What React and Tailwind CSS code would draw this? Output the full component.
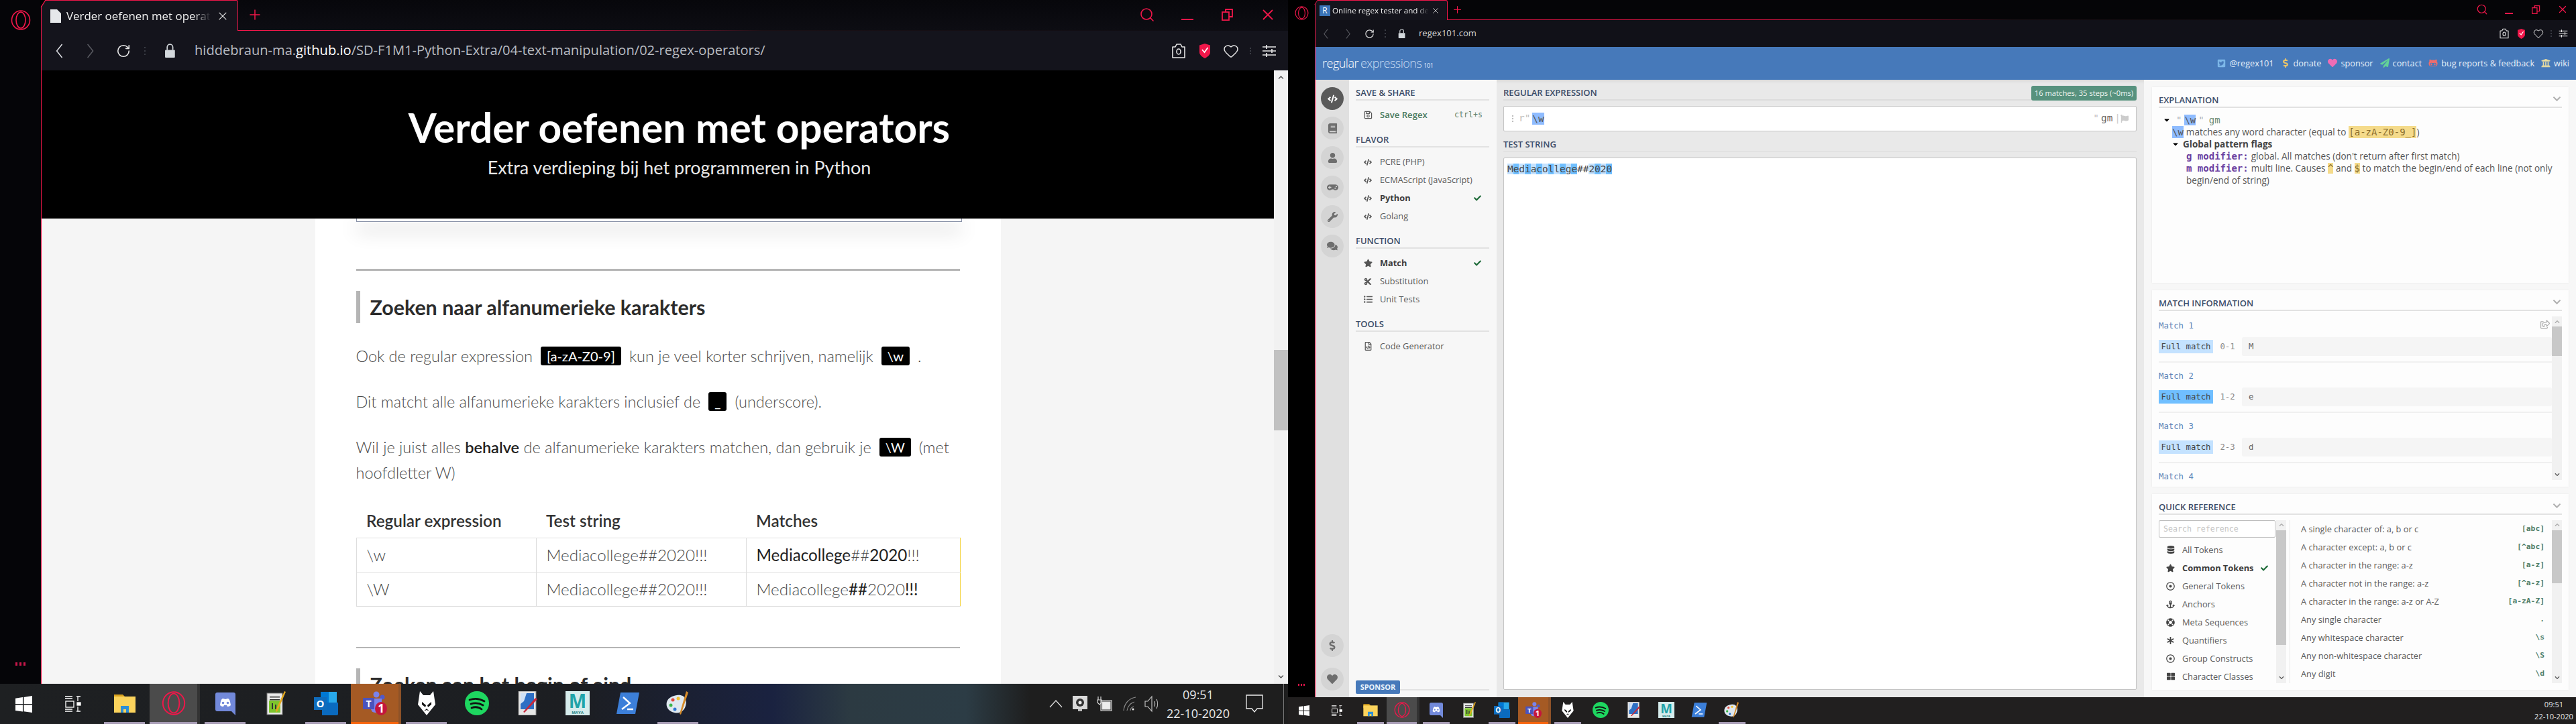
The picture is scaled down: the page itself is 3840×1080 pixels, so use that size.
import React from 'react';
import { Search, X, Plus, RotateCw, Heart } from 'lucide-react';
import {
  FaCode, FaBook, FaUser, FaGamepad, FaWrench, FaComments, FaDollarSign, FaHeart, FaRegSave, FaStar, FaCut,
  FaListUl, FaRegFileCode, FaCheck, FaDatabase, FaRegDotCircle, FaAnchor, FaLifeRing, FaAsterisk, FaThLarge,
  FaTwitterSquare, FaPaperPlane, FaGithubAlt, FaUniversity, FaFlag, FaRegShareSquare, FaChevronDown, FaCaretDown,
} from 'react-icons/fa';

const OPEN = "font-['Open_Sans',sans-serif]";
const MONO = "font-['DejaVu_Sans_Mono',monospace]";
const RED = '#f0174a';

// ---------- small drawings ----------
const OperaLogo = ({ size = 30 }) => (
  <svg width={size} height={size} viewBox="0 0 30 30" fill="none" stroke={RED} strokeWidth="1.6">
    <ellipse cx="15" cy="15" rx="13.5" ry="14" />
    <ellipse cx="15" cy="15" rx="7" ry="12" />
  </svg>
);

const Chevron = ({ dir = 'left', color, h = 22 }) => (
  <svg width={h * 0.6} height={h} viewBox="0 0 12 22" fill="none" stroke={color} strokeWidth="1.5">
    <polyline points={dir === 'left' ? '10,1 2,11 10,21' : '2,1 10,11 2,21'} />
  </svg>
);

const Dots = ({ color = '#3a3c44', gap = 'gap-[3px]' }) => (
  <div className={`flex flex-col ${gap}`}>
    <div className="w-[2px] h-[2px]" style={{ background: color }} />
    <div className="w-[2px] h-[2px]" style={{ background: color }} />
    <div className="w-[2px] h-[2px]" style={{ background: color }} />
  </div>
);

const LockIcon = ({ size = 20, color = '#d3d8dc' }) => (
  <svg width={size * 0.8} height={size} viewBox="0 0 16 20" fill={color}>
    <path d="M2 9h12a1 1 0 0 1 1 1v9a1 1 0 0 1-1 1H2a1 1 0 0 1-1-1v-9a1 1 0 0 1 1-1z" />
    <path d="M4 9V5a4 4 0 0 1 8 0v4" fill="none" stroke={color} strokeWidth="1.6" />
  </svg>
);

const CameraIcon = ({ size = 24, color = '#e6e6e6' }) => (
  <svg width={size} height={size} viewBox="0 0 24 24" fill="none" stroke={color} strokeWidth="1.6">
    <path d="M3 6h4l2-4h6l2 4h4v16H3z" strokeLinejoin="round" />
    <ellipse cx="12" cy="13" rx="3" ry="4" />
  </svg>
);

const ShieldIcon = ({ size = 22 }) => (
  <svg width={size} height={size} viewBox="0 0 22 22">
    <path d="M3 2.5 11 0l8 2.5V13c0 4-4 7-8 9-4-2-8-5-8-9z" fill={RED} />
    <polyline points="7,9 10.5,13 15.5,6" fill="none" stroke="#fff" strokeWidth="1.8" />
  </svg>
);

const SlidersIcon = ({ size = 22, color = '#e6e6e6' }) => (
  <svg width={size} height={size} viewBox="0 0 22 22" stroke={color} strokeWidth="1.7">
    <path d="M1 5h20M1 11h20M1 17h20M7 2v6M15 8v6M7 14v6" fill="none" />
  </svg>
);

const RestoreIcon = ({ size = 18 }) => (
  <svg width={size} height={size} viewBox="0 0 18 18" fill="none" stroke={RED} strokeWidth="1.8">
    <rect x="1" y="5" width="10" height="12" />
    <path d="M6 5V1h10v11h-5" />
  </svg>
);

const WinLogo = ({ size = 24 }) => (
  <svg width={size} height={size} viewBox="0 0 24 24" fill="#fff">
    <path d="M0 3.5 10.5 2v9.500H0zM12 1.800 24 0v11.500H12zM0 13h10.500v9.500L0 21zM12 13h12v11l-12-1.800z" />
  </svg>
);

const TaskViewIcon = ({ size = 24 }) => (
  <svg width={size} height={size} viewBox="0 0 24 24" fill="none" stroke="#fff" strokeWidth="1.3">
    <path d="M0 1h11M0 23h11M0 20h11M0 4h11" />
    <rect x="1" y="8" width="12" height="9" />
    <path d="M17 1h6M17 23h6M19 1v7M19 16v7" />
    <rect x="18" y="10" width="5" height="4" fill="#fff" />
  </svg>
);

// taskbar app icons, all on a 36 grid
const AppIcon = ({ name, size }) => {
  const p = { width: size, height: size, viewBox: '0 0 36 36' };
  if (name === 'explorer') return (
    <svg {...p}>
      <path d="M2 5h13l3 3v6H2z" fill="#d9a21e" />
      <rect x="2" y="8" width="32" height="24" fill="#fbd35c" />
      <path d="M12 22h12v10h-4v-5h-4v5h-4z" fill="#2e8fd8" />
    </svg>
  );
  if (name === 'opera') return <OperaLogo size={size} />;
  if (name === 'discord') return (
    <svg {...p}>
      <path d="M6 2h24a3 3 0 0 1 3 3v31l-6-6H6a3 3 0 0 1-3-3V5a3 3 0 0 1 3-3z" fill="#7289da" />
      <path d="M10 21c1-7 2-9 4-10l4 1 4-1c2 1 3 3 4 10-2 2-4 2-5 2l-1-2h-4l-1 2c-1 0-3 0-5-2z" fill="#fff" />
      <circle cx="14.500" cy="17.500" r="1.800" fill="#7289da" />
      <circle cx="21.500" cy="17.500" r="1.800" fill="#7289da" />
    </svg>
  );
  if (name === 'notepad') return (
    <svg {...p}>
      <rect x="5" y="3" width="23" height="32" fill="#e8e8e8" stroke="#777" />
      <rect x="8" y="14" width="17" height="18" fill="#7dc52c" />
      <path d="M12 18h2v9h-2zM17 20h2v7h-2zM9 12h15v1.500H9zM9 8h15v1.500H9z" fill="#333" />
      <path d="M33 1 21 29l-3 3 .5-5L31 0z" fill="#e3a81d" />
    </svg>
  );
  if (name === 'outlook') return (
    <svg {...p}>
      <rect x="10" y="1" width="24" height="16" fill="#28a8ea" />
      <rect x="10" y="1" width="12" height="16" fill="#0078d4" />
      <path d="M12 17h24v17a2 2 0 0 1-2 2H12z" fill="#0a6abf" />
      <rect x="0" y="9" width="19" height="19" fill="#0f6cbd" />
      <text x="9.500" y="24" fontSize="15" fontWeight="700" fill="#fff" textAnchor="middle" fontFamily="Open Sans">O</text>
    </svg>
  );
  if (name === 'teams') return (
    <svg {...p}>
      <circle cx="20" cy="5" r="4.500" fill="#7b83eb" />
      <circle cx="29" cy="9" r="3.500" fill="#5059c9" />
      <path d="M12 11h16v15a6 6 0 0 1-6 6h-4a6 6 0 0 1-6-6z" fill="#7b83eb" />
      <rect x="0" y="10" width="17" height="17" rx="1" fill="#4b53bc" />
      <text x="8.500" y="24" fontSize="14" fontWeight="700" fill="#fff" textAnchor="middle" fontFamily="Open Sans">T</text>
      <ellipse cx="27" cy="26" rx="9" ry="10" fill="#c4163c" />
      <text x="27" y="32" fontSize="17" fontWeight="700" fill="#fff" textAnchor="middle" fontFamily="Open Sans">1</text>
    </svg>
  );
  if (name === 'fox') return (
    <svg {...p}>
      <path d="M8 0l5 6h10l5-6 3 20-13 16L5 20z" fill="#fff" />
      <path d="M11 16l6 5-1 3-5-4zM25 16l-6 5 1 3 5-4zM14 30l4-4 4 4-4-2z" fill="#111" />
    </svg>
  );
  if (name === 'spotify') return (
    <svg {...p}>
      <ellipse cx="18" cy="18" rx="18" ry="18" fill="#1ed760" />
      <path d="M7 13c8-3 15-2 22 2M9 19c6-2 13-1 18 2M10 25c5-2 11-1 15 2" fill="none" stroke="#111" strokeWidth="2.800" strokeLinecap="round" />
    </svg>
  );
  if (name === 'paint') return (
    <svg {...p}>
      <rect x="5" y="0" width="26" height="36" fill="#e6e6e6" stroke="#888" />
      <rect x="8" y="3" width="20" height="24" fill="#2e6fc4" />
      <path d="M8 3h9l-4 12-5 4z" fill="#cfe0f5" />
      <path d="M33 12 14 32l-2-1 18-21z" fill="#c8283c" />
    </svg>
  );
  if (name === 'maya') return (
    <svg {...p}>
      <rect x="0" y="0" width="36" height="36" fill="#d6ecec" />
      <text x="18" y="25" fontSize="28" fontWeight="700" fill="#21a3a8" textAnchor="middle" fontFamily="Open Sans">M</text>
      <text x="18" y="34" fontSize="6" fontWeight="700" fill="#1a7f83" textAnchor="middle" fontFamily="Open Sans">MAYA</text>
    </svg>
  );
  if (name === 'shell') return (
    <svg {...p}>
      <path d="M7 2h28l-6 32H1z" fill="#3c7fd9" />
      <path d="M11 9l10 9-12 9M17 27h9" fill="none" stroke="#fff" strokeWidth="2.400" />
    </svg>
  );
  // palette
  return (
    <svg {...p}>
      <path d="M16 6c10-2 16 6 13 16-2 8-9 12-17 10C4 30-1 24 1 16 3 10 9 7 16 6z" fill="#dfe8ef" />
      <circle cx="10" cy="13" r="2.500" fill="#e2483c" />
      <circle cx="18" cy="11" r="2.500" fill="#f1c232" />
      <circle cx="7" cy="21" r="2.500" fill="#39b54a" />
      <circle cx="13" cy="27" r="2.500" fill="#2e78d2" />
      <path d="M30 0l3 2-11 33-2-1z" fill="#d58a28" />
    </svg>
  );
};

const TRAY_APPS = ['explorer', 'opera', 'discord', 'notepad', 'outlook', 'teams', 'fox', 'spotify', 'paint', 'maya', 'shell', 'palette'];
const OPEN_APPS = ['explorer', 'opera', 'discord', 'outlook', 'fox', 'palette'];

const TaskSlot = ({ name, slotClass, iconSize, barClass }) => {
  const active = name === 'opera';
  const teams = name === 'teams';
  const running = OPEN_APPS.includes(name);
  return (
    <div className={`${slotClass} h-full flex flex-col ${active ? 'bg-[#4b4b4b] border-r-[4px] border-[#333]' : ''} ${teams ? 'bg-[#a55a24] border-r-[4px] border-[#8e5228]' : ''}`}>
      <div className="flex-1 flex items-center justify-center">
        <AppIcon name={name} size={iconSize} />
      </div>
      {teams ? <div className="h-[3px] w-full bg-[#f7630c]" /> : active ? <div className="h-[3px] w-full bg-[#a79cb5]" /> : running ? <div className={`${barClass} h-[3px] self-center bg-[#a79cb5]`} /> : <div className="h-[3px]" />}
    </div>
  );
};

const Tray = () => (
  <div className={`flex items-center h-full ${OPEN} text-[#e8e8e8]`}>
    <svg width="20" height="12" viewBox="0 0 20 12" fill="none" stroke="#ddd" strokeWidth="1.300" className="mr-[15px]"><path d="M1 11 10 1l9 10" /></svg>
    <svg width="22" height="24" viewBox="0 0 22 24" className="mr-[14px]">
      <rect x="0" y="0" width="22" height="20" fill="#d9d9d9" />
      <circle cx="11" cy="10" r="6" fill="#333" />
      <circle cx="11" cy="10" r="2.500" fill="#eee" />
      <path d="M8 20h6v3H8z" fill="#bbb" />
    </svg>
    <svg width="24" height="24" viewBox="0 0 24 24" fill="none" stroke="#ddd" strokeWidth="1.200" className="mr-[14px]">
      <rect x="6" y="7" width="16" height="15" /><rect x="8" y="9" width="12" height="11" fill="#eee" /><path d="M2 1v5M6 1v5M1 6h6v4l-3 3-3-3z" />
    </svg>
    <svg width="22" height="24" viewBox="0 0 22 24" fill="none" stroke="#888" strokeWidth="1.200" className="mr-[10px]">
      <path d="M2 22C3 12 9 4 20 2M7 22c1-6 5-11 11-13M12 22c0-3 2-5 5-6" /><circle cx="16" cy="20" r="1.500" fill="#eee" stroke="none" />
    </svg>
    <svg width="24" height="26" viewBox="0 0 24 26" fill="none" stroke="#ccc" strokeWidth="1.100" className="mr-[7px]">
      <path d="M2 9h4l6-7v22l-6-7H2zM16 9c1 3 1 5 0 8M19 6c2 4 2 10 0 14" />
    </svg>
    <div className="w-[100px] flex flex-col items-center text-[18px] leading-[28px]">
      <span>09:51</span>
      <span>22-10-2020</span>
    </div>
    <svg width="26" height="28" viewBox="0 0 26 28" fill="none" stroke="#eee" strokeWidth="1.300" className="ml-[21px] mr-[30px]">
      <path d="M1 1h24v20h-8l-4 5-4-5H1z" />
    </svg>
    <div className="w-px h-full bg-[#777]" />
    <div className="w-[6px]" />
  </div>
);

const Scrollbar = ({ thumb, w = 'w-[15px]', className = '' }) => (
  <div className={`${w} shrink-0 bg-[#f1f1f1] flex flex-col ${className}`}>
    <div className="h-[15px] flex items-center justify-center text-[#aaa]"><FaChevronDown size={8} className="rotate-180" /></div>
    <div className="flex-1 flex flex-col">
      <div className={`${thumb} bg-[#c8c8c8]`} />
    </div>
    <div className="h-[15px] flex items-center justify-center text-[#555]"><FaChevronDown size={8} /></div>
  </div>
);

// ---------- left window: the lesson page ----------
const Code = ({ children }) => (
  <code className="inline-block align-[1px] h-[28px] leading-[28px] mx-[12px] px-[9px] rounded-[3px] bg-black text-white font-['Lato',sans-serif] font-normal text-[20.1px]">{children}</code>
);

const H2 = ({ children, className = '' }) => (
  <h2 className={`${className} h-[48px] flex items-center border-l-[6px] border-[#b5b5b5] pl-[15px] text-[30.4px] font-bold text-[#2c2c2c]`}>{children}</h2>
);

const Mixed = ({ parts }) => parts.map(([t, bold], i) => (
  <span key={i} className={bold ? 'font-normal text-[#222]' : ''}>{t}</span>
));

const LessonPage = () => (
  <div className="flex-1 min-w-0 flex flex-col overflow-hidden">
    <div className="h-[221px] bg-black text-center flex flex-col items-center pt-[47px] pl-[64px] font-['Lato',sans-serif]">
      <h1 className="text-[60.4px] leading-[76px] font-bold text-white">Verder oefenen met operators</h1>
      <p className="mt-[4px] text-[26.9px] leading-[36px] font-normal text-[#e8e8e8]">Extra verdieping bij het programmeren in Python</p>
    </div>
    <div className="flex-1 bg-[#f5f5f5] flex justify-center min-h-0">
      <div className="w-[1022px] h-full bg-white px-[61px] font-['Lato',sans-serif] font-light text-[23.5px] leading-[38px] text-[#4a4a4a] overflow-hidden">
        <div className="w-[903px] h-[5px] border-x border-b border-[#8a93a8] shadow-[0_12px_28px_rgba(0,0,0,0.3)]" />
        <div className="mt-[70px] h-[3px] bg-[#b5b5b5]" />
        <H2 className="mt-[30px]">Zoeken naar alfanumerieke karakters</H2>
        <p className="mt-[30px] whitespace-nowrap">Ook de regular expression<Code>[a-zA-Z0-9]</Code>kun je veel korter schrijven, namelijk<Code>\w</Code>.</p>
        <p className="mt-[30px] whitespace-nowrap">Dit matcht alle alfanumerieke karakters inclusief de<Code>_</Code>(underscore).</p>
        <p className="mt-[30px]">Wil je juist alles <b className="font-semibold text-[#222]">behalve</b> de alfanumerieke karakters matchen, dan gebruik je<Code>\W</Code>(met hoofdletter W)</p>
        <table className="mt-[28px] w-[901px] table-fixed border-collapse">
          <thead>
            <tr className="h-[50px] text-left text-[#333] text-[24.3px]">
              <th className="w-[268px] pl-[15px] font-semibold">Regular expression</th>
              <th className="w-[313px] pl-[15px] font-semibold">Test string</th>
              <th className="pl-[15px] font-semibold">Matches</th>
            </tr>
          </thead>
          <tbody className="text-[24.2px]">
            {[
              ['\\w', [['Mediacollege', 1], ['##', 0], ['2020', 1], ['!!!', 0]]],
              ['\\W', [['Mediacollege', 0], ['##', 1], ['2020', 0], ['!!!', 1]]],
            ].map(([re, parts]) => (
              <tr key={re} className="h-[51px]">
                <td className="border border-[#dedede] pl-[15px]">{re}</td>
                <td className="border border-[#dedede] pl-[15px]">Mediacollege##2020!!!</td>
                <td className="border border-[#dedede] border-r-[#f4d442] pl-[15px]"><Mixed parts={parts} /></td>
              </tr>
            ))}
          </tbody>
        </table>
        <div className="mt-[60px] h-[2px] bg-[#b5b5b5]" />
        <H2 className="mt-[30px]">Zoeken aan het begin of eind</H2>
      </div>
    </div>
  </div>
);

// ---------- opera chrome shared by both windows ----------
const TabCorner = ({ big }) => (
  <svg width={big ? 9 : 6} height={big ? 11 : 7} viewBox="0 0 9 11" preserveAspectRatio="none" className="absolute left-[-2px] top-0">
    <path d="M0 0h8L0 11z" fill="#000" />
    <path d="M8 0 1 11" stroke={RED} strokeWidth="1.300" fill="none" />
  </svg>
);

const TabBar = ({ big, favicon, title }) => (
  <div className={`flex shrink-0 ${big ? 'h-[46px]' : 'h-[30px]'}`}>
    <div className={`${big ? 'w-[293px] pl-[13px] gap-[8px] pr-[12px]' : 'w-[197px] pl-[6px] gap-[3px] pr-[8px]'} flex items-center border-t border-r border-[#f0174a] rounded-tr-[3px] bg-[#14141c]`}>
      {favicon}
      <span className={`${OPEN} ${big ? 'text-[16.9px] w-[216px]' : 'text-[11.65px] w-[144px]'} whitespace-nowrap overflow-hidden text-[#f2f2f2] [mask-image:linear-gradient(to_right,black_88%,transparent)]`}>{title}</span>
      <X size={big ? 20 : 14} strokeWidth={1.3} color="#eee" />
    </div>
    <div className={`flex-1 flex flex-col ${big ? 'bg-[linear-gradient(to_bottom,#07070b,#0d0d13)]' : 'bg-[#050507]'}`}>
      <div className="flex-1 flex items-center justify-between">
        <Plus size={big ? 24 : 17} strokeWidth={1.5} color={RED} className={big ? 'ml-[13px]' : 'ml-[6px]'} />
        <div className="flex items-center">
          <div className={`${big ? 'w-[60px]' : 'w-[40px]'} flex justify-center`}><Search size={big ? 24 : 18} strokeWidth={1.6} color={RED} /></div>
          <div className={`${big ? 'w-[60px]' : 'w-[40px]'} flex justify-center`}><div className={`${big ? 'w-[18px] mt-[14px]' : 'w-[12px] mt-[11px]'} h-[2px] bg-[#f0174a]`} /></div>
          <div className={`${big ? 'w-[60px]' : 'w-[40px]'} flex justify-center`}><RestoreIcon size={big ? 18 : 13} /></div>
          <div className={`${big ? 'w-[60px]' : 'w-[40px]'} flex justify-center`}><X size={big ? 26 : 18} strokeWidth={1.7} color={RED} /></div>
        </div>
      </div>
      <div className="h-[1.5px] bg-[linear-gradient(to_right,#f0174a,#f0174a_30%,#1a1015_50%,transparent)]" />
    </div>
  </div>
);

const AddressBar = ({ big, children }) => (
  <div className={`shrink-0 flex items-center ${big ? 'h-[59px] bg-[#14141c] pl-[20px]' : 'h-[40px] bg-[#111118] pl-[11px]'}`}>
    <div className={big ? 'w-[46px]' : 'w-[33px]'}><Chevron color={big ? '#dfe1e6' : '#5a5b62'} h={big ? 22 : 15} /></div>
    <div className={big ? 'w-[45px]' : 'w-[29px]'}><Chevron dir="right" color="#5a5b62" h={big ? 22 : 15} /></div>
    <div className={big ? 'w-[42px]' : 'w-[30px]'}><RotateCw size={big ? 22 : 15} strokeWidth={1.8} color="#e6e6e6" /></div>
    <div className={big ? 'w-[30px]' : 'w-[20px]'}><Dots /></div>
    <div className={big ? 'w-[45px]' : 'w-[31px]'}><LockIcon size={big ? 21 : 14} /></div>
    <div className={`${OPEN} whitespace-nowrap ${big ? 'text-[20.1px] text-[#b9bcc2]' : 'text-[13.05px] text-[#d8d8d8]'}`}>{children}</div>
    <div className="flex-1" />
    <div className={`flex items-center ${big ? 'gap-[16px] pr-[17px]' : 'gap-[10px] pr-[12px]'}`}>
      <CameraIcon size={big ? 24 : 16} />
      <ShieldIcon size={big ? 22 : 15} />
      <Heart size={big ? 24 : 16} strokeWidth={1.5} color="#e6e6e6" />
      <Dots gap="gap-[2px]" />
      <SlidersIcon size={big ? 22 : 14} />
    </div>
  </div>
);

// ---------- right window: regex101 ----------
const SectionHead = ({ title, right }) => (
  <div className="h-[31px] flex items-end justify-between border-b-2 border-[#e2e2e2] shrink-0">
    <span className={`${OPEN} text-[13px] leading-[20px] font-semibold text-[#3b4c68]`}>{title}</span>
    {right}
  </div>
);

const NavRow = ({ icon, label, bold, check, green, kbd }) => (
  <div className={`h-[27px] flex items-center ${OPEN} ${green ? 'text-[13.1px] font-semibold text-[#4a7a5c]' : 'text-[12.8px]'} ${bold ? 'font-bold text-[#3d3d3d]' : ''} ${!bold && !green ? 'text-[#5a5a5a]' : ''}`}>
    <div className="w-[36px] flex justify-center text-[#555]">{icon}</div>
    <span className="flex-1 whitespace-nowrap">{label}</span>
    {check && <FaCheck size={11} className="mr-[12px] text-[#1f6b3a]" />}
    {kbd && <span className={`${MONO} text-[11.6px] font-normal text-[#5e7f66] mr-[10px]`}>{kbd}</span>}
  </div>
);

const Rail = ({ icon, dark, className = '' }) => (
  <div className={`w-[34px] h-[34px] rounded-full flex items-center justify-center ${dark ? 'bg-[#5a5a5a] text-white' : 'bg-[#d4d4d4] text-[#6e6e6e]'} ${className}`}>{icon}</div>
);

const TEST = ['M', 'e', 'd', 'i', 'a', 'c', 'o', 'l', 'l', 'e', 'g', 'e'];

const Card = ({ title, children }) => (
  <div className="flex-1 min-h-0 bg-[#fdfdfd] shadow-[0_0_2px_rgba(0,0,0,0.08)] px-[10px] flex flex-col overflow-hidden">
    <SectionHead title={title} right={<FaChevronDown size={13} className="mb-[5px] mr-[1px] text-[#b0b0b0]" />} />
    {children}
  </div>
);

const Mark = ({ className = 'bg-[#8fbcff]', children }) => <span className={`${MONO} text-[14px] ${className}`}>{children}</span>;

const MatchItem = ({ n, range, value, strong }) => (
  <div className="h-[75px] shrink-0 border-b-2 border-[#f0f0f0] pt-[10px]">
    <div className={`${MONO} text-[12.3px] leading-[20px] text-[#5b84b8]`}>Match {n}</div>
    <div className={`mt-[7px] h-[28px] flex items-center ${MONO} text-[12.3px] text-[#666]`}>
      <span className={`w-[81px] h-[20px] leading-[20px] text-center text-[#444] ${strong ? 'bg-[#70bfff]' : 'bg-[#c4e2ff]'}`}>Full match</span>
      <span className="w-[43px] text-center text-[#888]">{range}</span>
      <span className="flex-1 h-full bg-[#f5f5f5] rounded-[3px] pl-[10px] leading-[28px]">{value}</span>
    </div>
  </div>
);

const TOKENS = [
  [<FaDatabase size={12} />, 'All Tokens'],
  [<FaStar size={13} />, 'Common Tokens', true],
  [<FaRegDotCircle size={13} />, 'General Tokens'],
  [<FaAnchor size={13} />, 'Anchors'],
  [<FaLifeRing size={13} />, 'Meta Sequences'],
  [<FaAsterisk size={11} />, 'Quantifiers'],
  [<FaRegDotCircle size={13} />, 'Group Constructs'],
  [<FaThLarge size={12} />, 'Character Classes'],
];

const REFS = [
  ['A single character of: a, b or c', '[abc]'],
  ['A character except: a, b or c', '[^abc]'],
  ['A character in the range: a-z', '[a-z]'],
  ['A character not in the range: a-z', '[^a-z]'],
  ['A character in the range: a-z or A-Z', '[a-zA-Z]'],
  ['Any single character', '.'],
  ['Any whitespace character', '\\s'],
  ['Any non-whitespace character', '\\S'],
  ['Any digit', '\\d'],
];

const RegexApp = () => (
  <div className="flex-1 min-h-0 flex flex-col">
    <header className={`h-[49px] shrink-0 bg-[#4679ba] flex items-center justify-between pl-[10px] pr-[10px] ${OPEN}`}>
      <div className="flex items-baseline text-[18px] font-light tracking-[-0.5px]">
        <span className="text-white">regular</span>
        <span className="ml-[3px] text-[#c9dcf3]">expressions</span>
        <span className="ml-[3px] text-[9px] font-normal text-[#e4eefa]">101</span>
      </div>
      <nav className="flex items-center gap-[10px] text-[12.7px] text-[#e8f0f9]">
        <span className="flex items-center gap-[5px]"><FaTwitterSquare size={13} className="text-[#7db7e8]" />@regex101</span>
        <span className="flex items-center gap-[5px]"><FaDollarSign size={14} className="text-[#e9c46a]" />donate</span>
        <span className="flex items-center gap-[5px]"><FaHeart size={14} className="text-[#ef6cb5]" />sponsor</span>
        <span className="flex items-center gap-[5px]"><FaPaperPlane size={14} className="text-[#63d297]" />contact</span>
        <span className="flex items-center gap-[5px]"><FaGithubAlt size={14} className="text-[#ee6d6d]" />bug reports &amp; feedback</span>
        <span className="flex items-center gap-[5px]"><FaUniversity size={14} className="text-[#e9dca0]" />wiki</span>
      </nav>
    </header>
    <div className="flex-1 min-h-0 flex">
      <div className="w-[50px] shrink-0 bg-[#e0e0e0] flex flex-col items-center pt-[11px] pb-[10px] gap-[10px]">
        <Rail dark icon={<FaCode size={15} />} />
        <Rail icon={<FaBook size={15} />} />
        <Rail icon={<FaUser size={15} />} />
        <Rail icon={<FaGamepad size={17} />} />
        <Rail icon={<FaWrench size={15} />} />
        <Rail icon={<FaComments size={16} />} />
        <div className="flex-1 -mb-[10px]" />
        <Rail icon={<FaDollarSign size={16} />} />
        <Rail className="mt-[6px]" icon={<FaHeart size={16} />} />
      </div>
      <aside className="w-[220px] shrink-0 bg-[#f7f7f7] pl-[10px] pr-[11px] flex flex-col">
        <SectionHead title="SAVE & SHARE" />
        <div className="mt-[8px] mb-[4px]"><NavRow green icon={<FaRegSave size={13} />} label="Save Regex" kbd="ctrl+s" /></div>
        <SectionHead title="FLAVOR" />
        <div className="mt-[8px] mb-[4px]">
          <NavRow icon={<FaCode size={12} />} label="PCRE (PHP)" />
          <NavRow icon={<FaCode size={12} />} label="ECMAScript (JavaScript)" />
          <NavRow bold check icon={<FaCode size={12} />} label="Python" />
          <NavRow icon={<FaCode size={12} />} label="Golang" />
        </div>
        <SectionHead title="FUNCTION" />
        <div className="mt-[8px] mb-[4px]">
          <NavRow bold check icon={<FaStar size={13} />} label="Match" />
          <NavRow icon={<FaCut size={12} />} label="Substitution" />
          <NavRow icon={<FaListUl size={13} />} label="Unit Tests" />
        </div>
        <SectionHead title="TOOLS" />
        <div className="mt-[8px]"><NavRow icon={<FaRegFileCode size={13} />} label="Code Generator" /></div>
        <div className="mt-auto mb-[5px] flex items-start h-[20px]">
          <span className={`w-[66px] h-[20px] rounded-[2px] bg-[#4679ba] text-center text-[11px] leading-[20px] font-bold text-[#eaf2fb] ${OPEN}`}>SPONSOR</span>
          <div className="flex-1 h-[15px] border-b-2 border-[#e2e2e2]" />
        </div>
      </aside>
      <main className="w-[965px] shrink-0 bg-[#e9e9e9] pl-[10px] pr-[11px] flex flex-col shadow-[inset_0_6px_6px_-6px_rgba(0,0,0,0.15)]">
        <div className="h-[31px] flex items-end justify-between border-b-2 border-[#dcdcdc] shrink-0">
          <span className={`${OPEN} text-[13px] leading-[20px] font-semibold text-[#3b4c68]`}>REGULAR EXPRESSION</span>
          <span className={`${OPEN} w-[157px] h-[22px] mb-[-2px] rounded-[3px] bg-[#57927e] text-center text-[11.2px] leading-[22px] text-[#f1f7f4] whitespace-nowrap`}>16 matches, 35 steps (~0ms)</span>
        </div>
        <div className={`mt-[8px] h-[38px] shrink-0 bg-white border border-[#c4c4c4] rounded-[2px] flex items-center pl-[12px] pr-[11px] ${MONO} text-[14.4px] text-[#bdbdbd]`}>
          <Dots color="#bdbdbd" gap="gap-[2px]" />
          <span className="ml-[8px]">r"</span>
          <span className="ml-[3px] h-[18px] leading-[18px] bg-[#8fbcff] text-[#555]">\w</span>
          <span className="flex-1" />
          <span>"</span>
          <span className="ml-[3px] text-[#666]">gm</span>
          <span className="ml-[3px] text-[#ccc]">|</span>
          <FaFlag size={12} className="text-[#ccc]" />
        </div>
        <SectionHead title="TEST STRING" />
        <div className={`mt-[8px] mb-[11px] flex-1 min-h-0 bg-white border border-[#c4c4c4] rounded-[2px] pt-[6px] pl-[5px] ${MONO} text-[14.4px] leading-[20px] text-[#444]`}>
          {TEST.map((c, i) => <span key={i} className={i % 2 ? 'bg-[#70bfff]' : 'bg-[#c4e2ff]'}>{c}</span>)}
          <span>##</span>
          {['2', '0', '2', '0'].map((c, i) => <span key={i} className={i % 2 ? 'bg-[#70bfff]' : 'bg-[#c4e2ff]'}>{c}</span>)}
        </div>
      </main>
      <section className="flex-1 min-w-0 bg-[#f7f7f7] pl-[12px] pr-[11px] py-[11px] flex flex-col gap-[11px]">
        <Card title="EXPLANATION">
          <div className={`mt-[9px] pl-[7px] ${OPEN} text-[13.55px] leading-[18px] text-[#555]`}>
            <div className="flex items-center whitespace-nowrap">
              <FaCaretDown size={12} className="text-black mr-[8px] ml-[-1px]" />
              <Mark className="text-[#aaa]">"</Mark>
              <Mark className="ml-[4px] h-[16px] leading-[16px] bg-[#8fbcff] text-[#555]">\w</Mark>
              <Mark className="ml-[4px] text-[#aaa]">"</Mark>
              <Mark className="ml-[7px] text-[#6b8a72]">gm</Mark>
            </div>
            <div className="pl-[13px] flex items-center whitespace-nowrap">
              <Mark className="bg-[#8fbcff] text-[#555] mr-[4px]">\w</Mark>
              matches any word character (equal to
              <Mark className="ml-[4px] bg-[#f5db8b] text-[#8a6d2b]">[a-zA-Z0-9_]</Mark>)
            </div>
            <div className="pl-[13px] flex items-center font-bold text-[13.5px] text-[#444] whitespace-nowrap"><FaCaretDown size={12} className="text-black mr-[5px] -ml-[1px]" />Global pattern flags</div>
            <div className="pl-[34px]">
              <div className="whitespace-nowrap"><b className={`${MONO} font-bold text-[#6a3fa0] text-[14px] mr-[4px]`}>g modifier:</b>global. All matches (don't return after first match)</div>
              <div><b className={`${MONO} font-bold text-[#6a3fa0] text-[14px] mr-[4px]`}>m modifier:</b>multi line. Causes <Mark className="bg-[#f5db8b] text-[#8a6d2b]">^</Mark> and <Mark className="bg-[#f5db8b] text-[#8a6d2b]">$</Mark> to match the begin/end of each line (not only begin/end of string)</div>
            </div>
          </div>
        </Card>
        <Card title="MATCH INFORMATION">
          <div className="flex-1 min-h-0 flex">
            <div className="flex-1 min-w-0 flex flex-col overflow-hidden relative pt-[2px]">
              <FaRegShareSquare size={14} className="absolute right-[3px] top-[13px] text-[#aaa]" />
              <MatchItem n={1} range="0-1" value="M" />
              <MatchItem n={2} range="1-2" value="e" strong />
              <MatchItem n={3} range="2-3" value="d" />
              <MatchItem n={4} range="3-4" value="i" />
            </div>
            <Scrollbar thumb="h-[44px]" className="mt-[8px] mb-[10px]" />
          </div>
        </Card>
        <Card title="QUICK REFERENCE">
          <div className="flex-1 min-h-0 flex mt-[8px] mb-[10px]">
            <div className="w-[174px] shrink-0 flex flex-col overflow-hidden">
              <div className={`h-[26px] shrink-0 border border-[#bdbdbd] rounded-[2px] bg-white pl-[6px] ${MONO} text-[11.6px] leading-[24px] text-[#c4c4c4]`}>Search reference</div>
              <div className="mt-[5px]">
                {TOKENS.map(([icon, label, on]) => (
                  <div key={label} className={`h-[27px] flex items-center ${OPEN} text-[12.8px] ${on ? 'font-bold text-[#3d3d3d]' : 'text-[#5a5a5a]'}`}>
                    <div className="w-[35px] flex justify-center text-[#444]">{icon}</div>
                    <span className="whitespace-nowrap">{label}</span>
                    {on && <FaCheck size={11} className="ml-[11px] text-[#1f6b3a]" />}
                  </div>
                ))}
              </div>
            </div>
            <Scrollbar thumb="h-[171px]" className="ml-[1px]" />
            <div className="w-px ml-[5px] bg-[#e6e6e6]" />
            <div className="flex-1 min-w-0 pl-[16px] pr-[11px] overflow-hidden">
              {REFS.map(([label, code]) => (
                <div key={label} className={`h-[27px] flex items-center justify-between ${OPEN} text-[12.8px] text-[#5a5a5a] whitespace-nowrap`}>
                  <span>{label}</span>
                  <span className={`${MONO} text-[11.3px] font-bold text-[#4f7f6a]`}>{code}</span>
                </div>
              ))}
            </div>
            <Scrollbar thumb="h-[79px]" />
          </div>
        </Card>
      </section>
    </div>
  </div>
);

export default function App() {
  return (
    <div className="w-[3840px] h-[1080px] flex overflow-hidden bg-black">
      {/* left monitor */}
      <div className="w-[1920px] h-full flex flex-col">
        <div className="flex-1 min-h-0 flex">
          <div className="w-[61px] shrink-0 bg-[#050508] flex flex-col items-center pt-[15px] pb-[27px]">
            <OperaLogo size={30} />
            <div className="mt-auto flex gap-[3px]">
              <div className="w-[3px] h-[5px] bg-[#c8174a]" /><div className="w-[3px] h-[5px] bg-[#c8174a]" /><div className="w-[3px] h-[5px] bg-[#c8174a]" />
            </div>
          </div>
          <div className="relative flex-1 min-w-0 flex flex-col border-l-[1.5px] border-[#f0174a]">
            <TabCorner big />
            <TabBar big title="Verder oefenen met operators" favicon={
              <svg width="16" height="20" viewBox="0 0 16 20" className="shrink-0"><path d="M0 0h10l6 6v14H0z" fill="#e6e8ea" /></svg>
            } />
            <AddressBar big>
              hiddebraun-ma.<span className="text-white font-medium">github.io</span>/SD-F1M1-Python-Extra/04-text-manipulation/02-regex-operators/
            </AddressBar>
            <div className="flex-1 min-h-0 flex">
              <LessonPage />
              <div className="w-[21px] shrink-0 bg-[#f1f1f1] flex flex-col">
                <div className="h-[21px] flex items-center justify-center text-[#555]"><FaChevronDown size={9} className="rotate-180" /></div>
                <div className="flex-1 pt-[396px]"><div className="h-[120px] bg-[#c1c1c1]" /></div>
                <div className="h-[21px] flex items-center justify-center text-[#555]"><FaChevronDown size={9} /></div>
              </div>
            </div>
          </div>
        </div>
        <div className="h-[60px] shrink-0 flex items-stretch bg-[linear-gradient(to_right,#1e2022,#1c1e22_45%,#1a2240_60%,#2c3a42_66%,#2c3c45_75%,#1e1e1e_80%)]">
          <div className="w-[70px] flex items-center justify-center"><WinLogo size={25} /></div>
          <div className="w-[78px] flex items-center justify-center"><TaskViewIcon size={24} /></div>
          {TRAY_APPS.map((n) => <TaskSlot key={n} name={n} slotClass="w-[75px]" iconSize={36} barClass="w-[61px]" />)}
          <div className="flex-1" />
          <Tray />
        </div>
      </div>

      {/* right monitor */}
      <div className="w-[1920px] h-full flex flex-col">
        <div className="flex-1 min-h-0 flex">
          <div className="w-[40px] shrink-0 bg-black flex flex-col items-center pt-[9px] pb-[17px]">
            <OperaLogo size={21} />
            <div className="mt-auto flex gap-[2px]">
              <div className="w-[2px] h-[3px] bg-[#e0154a]" /><div className="w-[2px] h-[3px] bg-[#e0154a]" /><div className="w-[2px] h-[3px] bg-[#e0154a]" />
            </div>
          </div>
          <div className="relative flex-1 min-w-0 flex flex-col border-l-[1.5px] border-[#f0174a]">
            <TabCorner />
            <TabBar title="Online regex tester and debugger: Python" favicon={
              <span className={`${OPEN} w-[16px] h-[16px] shrink-0 bg-[#3a74b8] text-white text-[12px] leading-[16px] text-center`}>R</span>
            } />
            <AddressBar>regex101.com</AddressBar>
            <RegexApp />
          </div>
        </div>
        <div className="h-[40px] shrink-0 flex items-stretch bg-[#211f1f]">
          <div className="w-[48px] flex items-center justify-center"><WinLogo size={16} /></div>
          <div className="w-[50px] flex items-center justify-center"><TaskViewIcon size={16} /></div>
          {TRAY_APPS.map((n) => <TaskSlot key={n} name={n} slotClass="w-[49px]" iconSize={24} barClass="w-[40px]" />)}
          <div className="flex-1" />
          <div className={`${OPEN} w-[60px] mr-[3px] flex flex-col items-center justify-center text-[11.1px] leading-[18px] text-[#e8e8e8]`}>
            <span>09:51</span>
            <span>22-10-2020</span>
          </div>
        </div>
      </div>
    </div>
  );
}
